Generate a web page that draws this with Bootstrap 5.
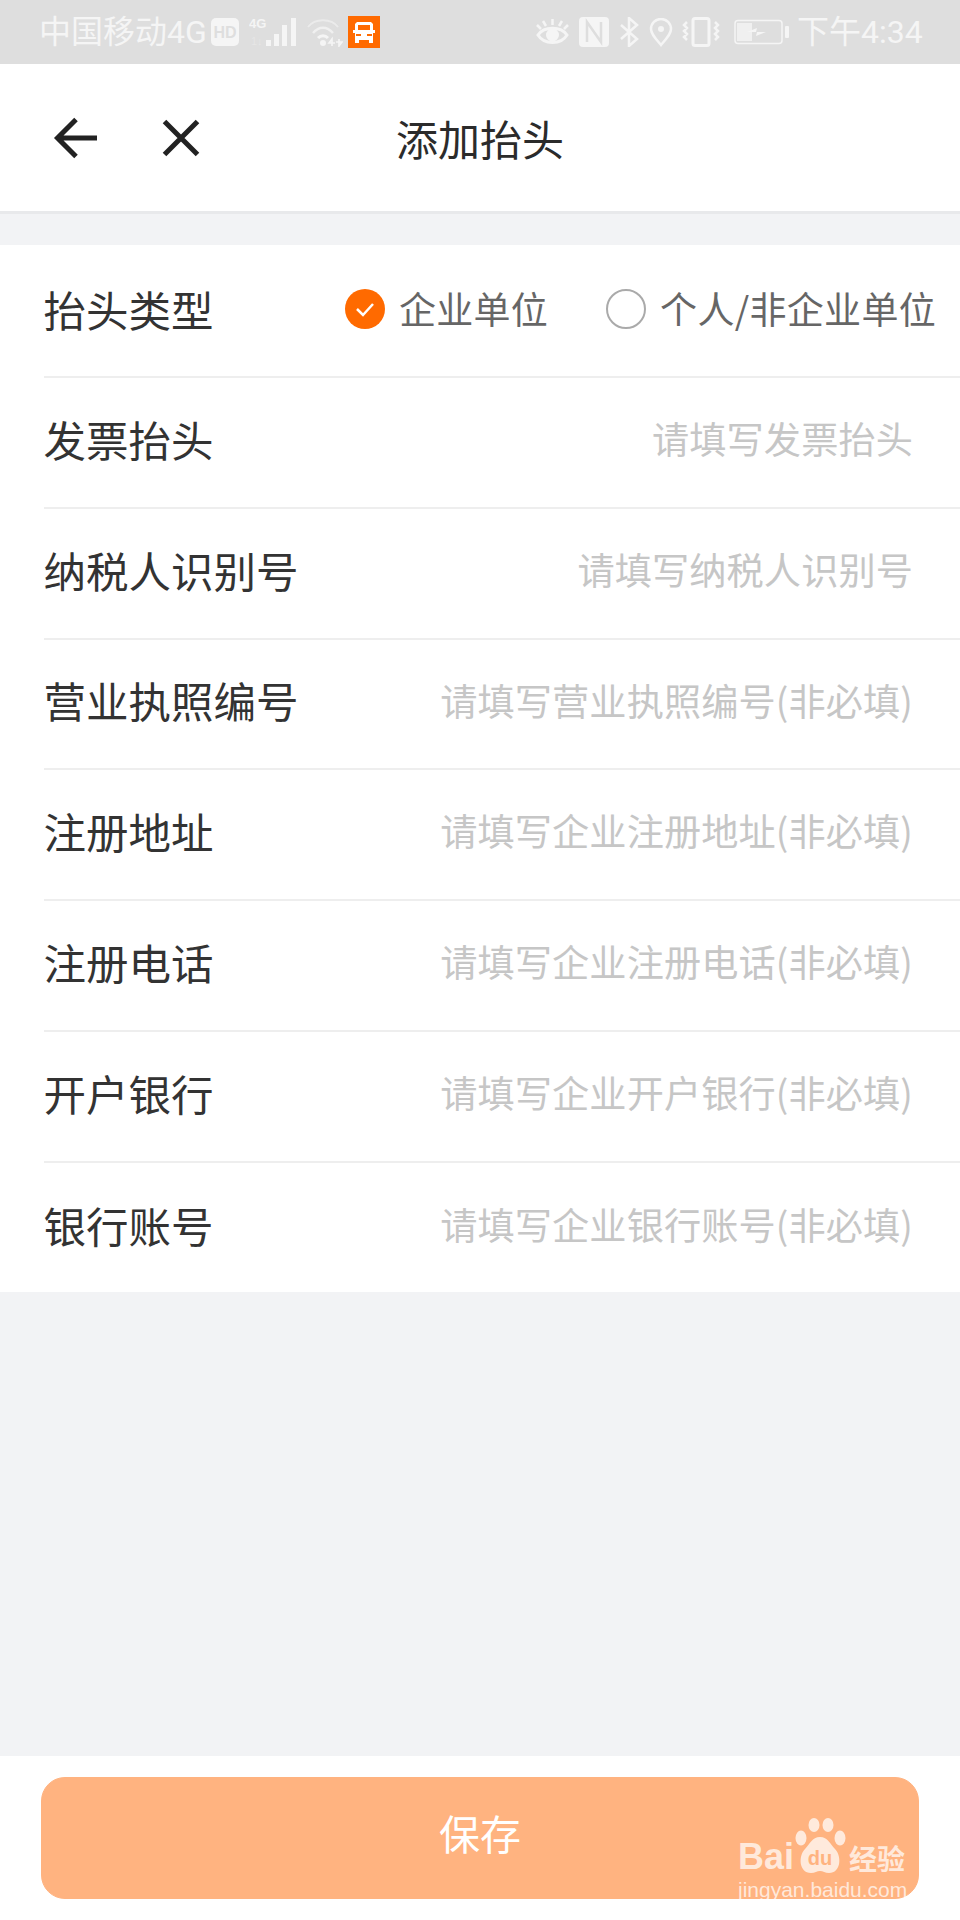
<!DOCTYPE html>
<html lang="zh-CN">
<head>
    <meta charset="UTF-8">
    <meta name="viewport" content="width=device-width, initial-scale=1.0">
    <title>添加抬头</title>
    <link href="https://cdn.jsdelivr.net/npm/bootstrap@5.3.0/dist/css/bootstrap.min.css" rel="stylesheet">
    <style>
        body {
            font-family: "Noto Sans CJK SC", "Liberation Sans", sans-serif;
            background: #f2f3f5;
            color: #333;
        }
        .screen { width: 960px; height: 1920px; }
        /* status bar */
        .status-bar {
            height: 64px;
            background: #dedede;
            color: #f5f5f5;
            padding: 0 38px 0 39px;
            font-family: Roboto, "Noto Sans CJK SC", sans-serif;
            font-size: 32px;
            line-height: 67px;
        }
        .status-bar svg { display: block; flex: none; }
        .carrier { width: 164px; white-space: nowrap; }
        .clock { white-space: nowrap; width: 125px; }
        /* header */
        .top-bar {
            height: 150px;
            background: #fff;
            border-bottom: 3px solid #e8e9eb;
        }
        .top-side { flex: 1 1 0; padding-left: 53px; }
        .top-title { font-size: 42px; line-height: 1; color: #2b2b2b; }
        /* form rows */
        .form-box { margin-top: 31px; background: #fff; --bs-list-group-bg: #fff; }
        .form-line {
            height: 130.75px;
            margin-left: 43.5px;
            padding: 0 47px 8px 0;
            border-bottom: 2px solid #eeeeee;
        }
        .form-line.type-line { height: 133px; padding: 0 24px 4px 0; }
        .form-line.last-line { height: 129px; padding-bottom: 6px; border-bottom: 0; }
        .line-label { font-size: 42.5px; line-height: 1.2; color: #333; white-space: nowrap; }
        .line-hint { font-size: 37.2px; line-height: 1.2; color: #c6c6c6; white-space: nowrap; letter-spacing: .1px; }
        .radio-text { font-size: 37px; line-height: 1.2; color: #666; white-space: nowrap; letter-spacing: .3px; }
        .radio-on, .radio-off { width: 40px; height: 40px; border-radius: 50%; flex: none; }
        .radio-on { background: #ff6a00; }
        .radio-off { border: 2px solid #aaa; }
        /* bottom */
        .bottom-bar { height: 164px; background: #fff; padding: 21px 41px 0; }
        .save-btn {
            --bs-btn-bg: #ffb380;
            --bs-btn-border-color: #ffb380;
            --bs-btn-color: #fff;
            --bs-btn-disabled-bg: #ffb380;
            --bs-btn-disabled-border-color: #ffb380;
            --bs-btn-disabled-color: #fff;
            --bs-btn-disabled-opacity: 1;
            width: 878px;
            height: 122px;
            border-radius: 24px;
            font-size: 41px;
            padding: 0 0 10px;
        }
        /* watermark */
        .baidu-mark {
            position: absolute;
            left: 738px;
            top: 1817px;
            width: 172px;
            color: rgba(255, 255, 255, .72);
            line-height: 1;
            font-family: "Liberation Sans", sans-serif;
        }
        .mark-top { height: 57px; }
        .mark-top svg { flex: none; }
        .mark-bai { font-size: 36px; font-weight: 700; line-height: 34px; width: 57px; white-space: nowrap; }
        .mark-jy { font-family: "Noto Sans CJK SC", sans-serif; font-size: 28px; font-weight: 700; line-height: 32px; margin-left: 3px; white-space: nowrap; }
        .mark-url { font-size: 21px; margin-top: 5px; white-space: nowrap; }
    </style>
</head>
<body>
<div class="screen d-flex flex-column">

    <!-- status bar -->
    <div class="status-bar d-flex align-items-center">
        <span class="carrier">中国移动4G</span>
        <svg class="ms-2" width="28" height="28" viewBox="0 0 28 28"><rect width="28" height="28" rx="5" fill="#f5f5f5"/><text x="14" y="20" font-family="Liberation Sans" font-size="16" font-weight="700" text-anchor="middle" fill="#dedede">HD</text></svg>
        <svg style="margin-left:10px" width="49" height="32" viewBox="0 0 49 32" fill="#f5f5f5"><text x="0" y="12" font-family="Liberation Sans" font-size="13" font-weight="700">4G</text><text x="2" y="29" font-family="Liberation Sans" font-size="11" opacity=".35">1↓</text><rect x="17" y="24" width="5" height="6"/><rect x="25" y="18" width="5" height="12"/><rect x="33" y="9" width="5" height="21"/><rect x="42" y="2" width="5" height="28"/></svg>
        <svg style="margin-left:9px" width="36" height="30" viewBox="0 0 36 30" fill="none" stroke="#f5f5f5"><path d="M1 10C8 1 24 1 31 10" stroke-width="2" opacity=".55"/><path d="M6 16C12 9 20 9 26 16" stroke-width="2.500" opacity=".75"/><path d="M11 21C14 18 18 18 21 21" stroke-width="3"/><circle cx="16" cy="26" r="3" fill="#f5f5f5" stroke="none"/><path d="M25 29v-7l-3 4h6M32 22v7l3-4h-6" stroke-width="1.600"/></svg>
        <svg style="margin-left:5px" width="32" height="32" viewBox="0 0 32 32"><rect width="32" height="32" fill="#ff6a00"/><path d="M9 6h14l2 2v6h2v3h-2v10h-4v-3H11v3H7V17H5v-3h2V8zM10 9v5h12V9zM8 18v2h5v-2zM19 18v2h5v-2z" fill="#fff" fill-rule="evenodd"/></svg>

        <svg class="ms-auto" width="33" height="28" viewBox="0 0 33 28" fill="none" stroke="#f5f5f5" stroke-width="3"><path d="M2 17C8 8 25 8 31 17C25 27 8 27 2 17Z"/><circle cx="16.500" cy="17" r="5" fill="#f5f5f5"/><path d="M16.500 1v6M7 3l3 5M26 3l-3 5M1 7l4 4M32 7l-4 4" stroke-width="2.500"/></svg>
        <svg style="margin-left:10px" width="30" height="30" viewBox="0 0 30 30"><rect width="30" height="30" rx="4" fill="#f5f5f5"/><path d="M8 25V5l14 20V5" fill="none" stroke="#dedede" stroke-width="2.500"/></svg>
        <svg style="margin-left:10px" width="20" height="30" viewBox="0 0 20 30" fill="none" stroke="#f5f5f5" stroke-width="2.500"><path d="M2 8l16 14-8 7V1l8 7L2 22"/></svg>
        <svg style="margin-left:10px" width="24" height="29" viewBox="0 0 24 29" fill="none" stroke="#f5f5f5" stroke-width="2.500"><path d="M12 27C6 20 2 16 2 11a10 10 0 0 1 20 0c0 5-4 9-10 16Z"/><circle cx="12" cy="11" r="3" fill="#f5f5f5" stroke="none"/></svg>
        <svg style="margin-left:9px" width="38" height="30" viewBox="0 0 38 30" fill="none" stroke="#f5f5f5" stroke-width="3"><rect x="11" y="1.500" width="16" height="27" rx="2"/><path d="M5 5l-3 3 3 3-3 3 3 3-3 3 3 3M33 5l3 3-3 3 3 3-3 3 3 3-3 3" stroke-width="2.500"/></svg>
        <svg style="margin-left:14px" width="55" height="26" viewBox="0 0 55 26"><rect x="1" y="1.500" width="47" height="23" rx="3" fill="none" stroke="#f5f5f5" stroke-width="1.500"/><rect x="3" y="4" width="15" height="18" fill="#f5f5f5" opacity=".75"/><path d="M13 13l10-4-1 4h10l-10 4 1-4z" fill="#f5f5f5"/><rect x="51" y="7" width="4" height="12" rx="1" fill="#f5f5f5"/></svg>
        <span class="clock ms-2 text-end">下午4:34</span>
    </div>

    <!-- header -->
    <div class="top-bar d-flex align-items-center">
        <div class="top-side d-flex align-items-center">
            <svg width="44" height="44" viewBox="0 0 44 44" fill="none" stroke="#222" stroke-width="5"><path d="M44 22H5M23 3.500L4.500 22 23 40.500"/></svg>
            <svg style="margin-left:65px" width="38" height="38" viewBox="0 0 38 38" fill="none" stroke="#222" stroke-width="5"><path d="M2.500 2.500l33 33M35.500 2.500l-33 33"/></svg>
        </div>
        <div class="top-title">添加抬头</div>
        <div class="top-side"></div>
    </div>

    <!-- form -->
    <div class="form-box list-group list-group-flush rounded-0">
        <div class="form-line type-line d-flex align-items-center">
            <span class="line-label me-auto">抬头类型</span>
            <span class="radio-on d-flex align-items-center justify-content-center">
                <svg width="20" height="16" viewBox="0 0 20 16" fill="none" stroke="#fff" stroke-width="2.500"><path d="M2 8l6 6L18 3"/></svg>
            </span>
            <span class="radio-text" style="margin-left:14px">企业单位</span>
            <span class="radio-off" style="margin-left:58px"></span>
            <span class="radio-text" style="margin-left:14px">个人/非企业单位</span>
        </div>
        <div class="form-line d-flex align-items-center justify-content-between">
            <span class="line-label">发票抬头</span><span class="line-hint">请填写发票抬头</span>
        </div>
        <div class="form-line d-flex align-items-center justify-content-between">
            <span class="line-label">纳税人识别号</span><span class="line-hint">请填写纳税人识别号</span>
        </div>
        <div class="form-line d-flex align-items-center justify-content-between">
            <span class="line-label">营业执照编号</span><span class="line-hint">请填写营业执照编号(非必填)</span>
        </div>
        <div class="form-line d-flex align-items-center justify-content-between">
            <span class="line-label">注册地址</span><span class="line-hint">请填写企业注册地址(非必填)</span>
        </div>
        <div class="form-line d-flex align-items-center justify-content-between">
            <span class="line-label">注册电话</span><span class="line-hint">请填写企业注册电话(非必填)</span>
        </div>
        <div class="form-line d-flex align-items-center justify-content-between">
            <span class="line-label">开户银行</span><span class="line-hint">请填写企业开户银行(非必填)</span>
        </div>
        <div class="form-line last-line d-flex align-items-center justify-content-between">
            <span class="line-label">银行账号</span><span class="line-hint">请填写企业银行账号(非必填)</span>
        </div>
    </div>

    <!-- save -->
    <div class="bottom-bar mt-auto">
        <button class="btn save-btn d-flex align-items-center justify-content-center" disabled>保存</button>
    </div>
</div>

<!-- watermark -->
<div class="baidu-mark">
    <div class="mark-top d-flex align-items-end">
        <span class="mark-bai">Bai</span>
        <svg width="51" height="56" viewBox="0 0 51 56" fill="currentColor">
            <ellipse cx="19" cy="7" rx="5.500" ry="7"/>
            <ellipse cx="33" cy="7" rx="5.500" ry="7"/>
            <ellipse cx="6" cy="20" rx="5.500" ry="7.500"/>
            <ellipse cx="45" cy="20" rx="5.500" ry="7.500"/>
            <path d="M25 19c8 0 10 7 15 12 7 7 6 24-6 24-4 0-6-2-9-2s-5 2-9 2C4 55 3 38 10 31c5-5 7-12 15-12Z"/>
            <text x="25" y="47" font-family="Liberation Sans" font-size="20" font-weight="700" text-anchor="middle" fill="#ffb380">du</text>
        </svg>
        <span class="mark-jy">经验</span>
    </div>
    <div class="mark-url">jingyan.baidu.com</div>
</div>
</body>
</html>
